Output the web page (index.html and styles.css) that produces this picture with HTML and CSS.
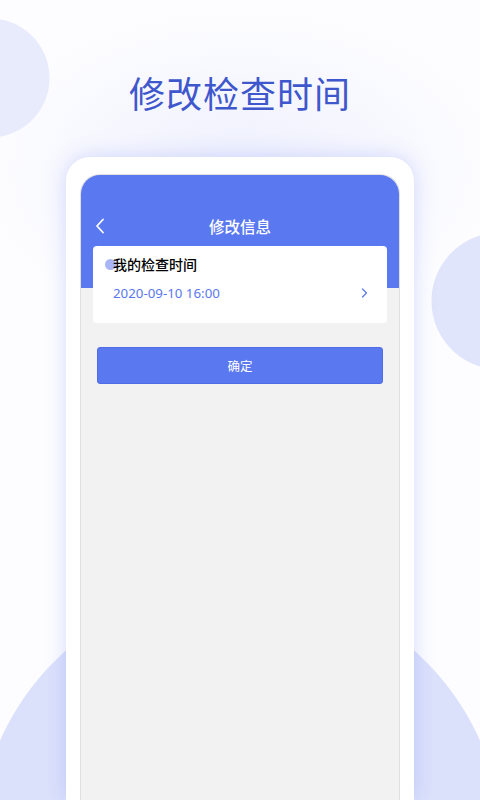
FILE: index.html
```html
<!DOCTYPE html>
<html lang="zh-CN">
<head>
<meta charset="utf-8">
<title>修改检查时间</title>
<link rel="stylesheet" href="styles.css">
</head>
<body>
<h1 class="headline">修改检查时间</h1>
<div class="phone">
  <div class="screen">
    <div class="nav">
      <svg class="back" width="10" height="16" viewBox="0 0 10 16"><path d="M8 1.5 L2 8 L8 14.5" fill="none" stroke="#fff" stroke-width="1.8" stroke-linecap="round" stroke-linejoin="round"/></svg>
      <span class="nav-title">修改信息</span>
    </div>
    <div class="card">
      <div class="label"><span class="dot"></span>我的检查时间</div>
      <div class="row">
        <span class="date">2020-09-10 16:00</span>
        <svg class="chev" width="7" height="10" viewBox="0 0 7 10"><path d="M1.5 1 L5.5 5 L1.5 9" fill="none" stroke="#5a78f0" stroke-width="1.2" stroke-linecap="round" stroke-linejoin="round"/></svg>
      </div>
    </div>
    <button class="confirm">确定</button>
  </div>
</div>
</body>
</html>
```
FILE: styles.css
```css
html, body {
  margin: 0;
  padding: 0;
}
body {
  width: 480px;
  height: 800px;
  overflow: hidden;
  font-family: "Noto Sans", "Noto Sans CJK SC", sans-serif;
  background:
    radial-gradient(circle at -10px 78px, #e8ebfc 59px, rgba(232,235,252,0) 60px),
    radial-gradient(circle at 500px 301px, #e1e5fb 68px, rgba(225,229,251,0) 69px),
    radial-gradient(circle at 240px 847px, #dce1fb 262px, rgba(220,225,251,0) 263px),
    radial-gradient(ellipse 260px 160px at 240px 170px, #eef0fd, rgba(255,255,255,0)),
    #fdfdff;
}
.headline {
  margin: 0;
  padding-top: 70px;
  height: 44px;
  line-height: 44px;
  text-align: center;
  font-family: "Noto Sans CJK SC", sans-serif;
  font-size: 36px;
  font-weight: 400;
  color: #3f57cc;
  letter-spacing: 1px;
}
.phone {
  width: 348px;
  height: 643px;
  margin: 43px auto 0;
  box-sizing: border-box;
  padding: 17px 14px 0;
  background: #fff;
  border-radius: 24px 24px 0 0;
  box-shadow: 0 0 22px rgba(110, 130, 240, 0.28);
}
.screen {
  height: 100%;
  box-sizing: border-box;
  border: 1.5px solid #e0e0e0;
  border-bottom: none;
  border-radius: 20px 20px 0 0;
  overflow: hidden;
  background: linear-gradient(#5a78f0 0, #5a78f0 113px, #f2f2f2 113px);
}
.nav {
  height: 40px;
  margin-top: 31px;
  display: flex;
  align-items: center;
  justify-content: center;
  position: relative;
}
.back {
  position: absolute;
  left: 14px;
  top: 12px;
}
.nav-title {
  font-family: "Noto Sans CJK SC", sans-serif;
  font-size: 15.5px;
  font-weight: 500;
  color: #fff;
}
.card {
  margin: 0 12px;
  height: 77px;
  box-sizing: border-box;
  padding: 8px 19px 0 12px;
  background: #fff;
  border-radius: 4px;
}
.label {
  display: flex;
  align-items: center;
  height: 20px;
  font-family: "Noto Sans CJK SC", sans-serif;
  font-size: 14px;
  font-weight: 500;
  color: #000;
}
.dot {
  width: 11px;
  height: 11px;
  border-radius: 50%;
  background: #a9b5f4;
  margin-right: -3px;
}
.row {
  margin-top: 9px;
  height: 20px;
  padding-left: 8px;
  display: flex;
  align-items: center;
  justify-content: space-between;
}
.date {
  font-size: 13.3px;
  color: #5a78f0;
}
.confirm {
  display: block;
  margin: 24px 16px 0;
  width: calc(100% - 32px);
  height: 37px;
  border: 1px solid #4f6de6;
  border-radius: 3px;
  background: #5a78f0;
  color: #fff;
  font-family: "Noto Sans CJK SC", sans-serif;
  font-size: 12.5px;
  padding: 0;
}
```
